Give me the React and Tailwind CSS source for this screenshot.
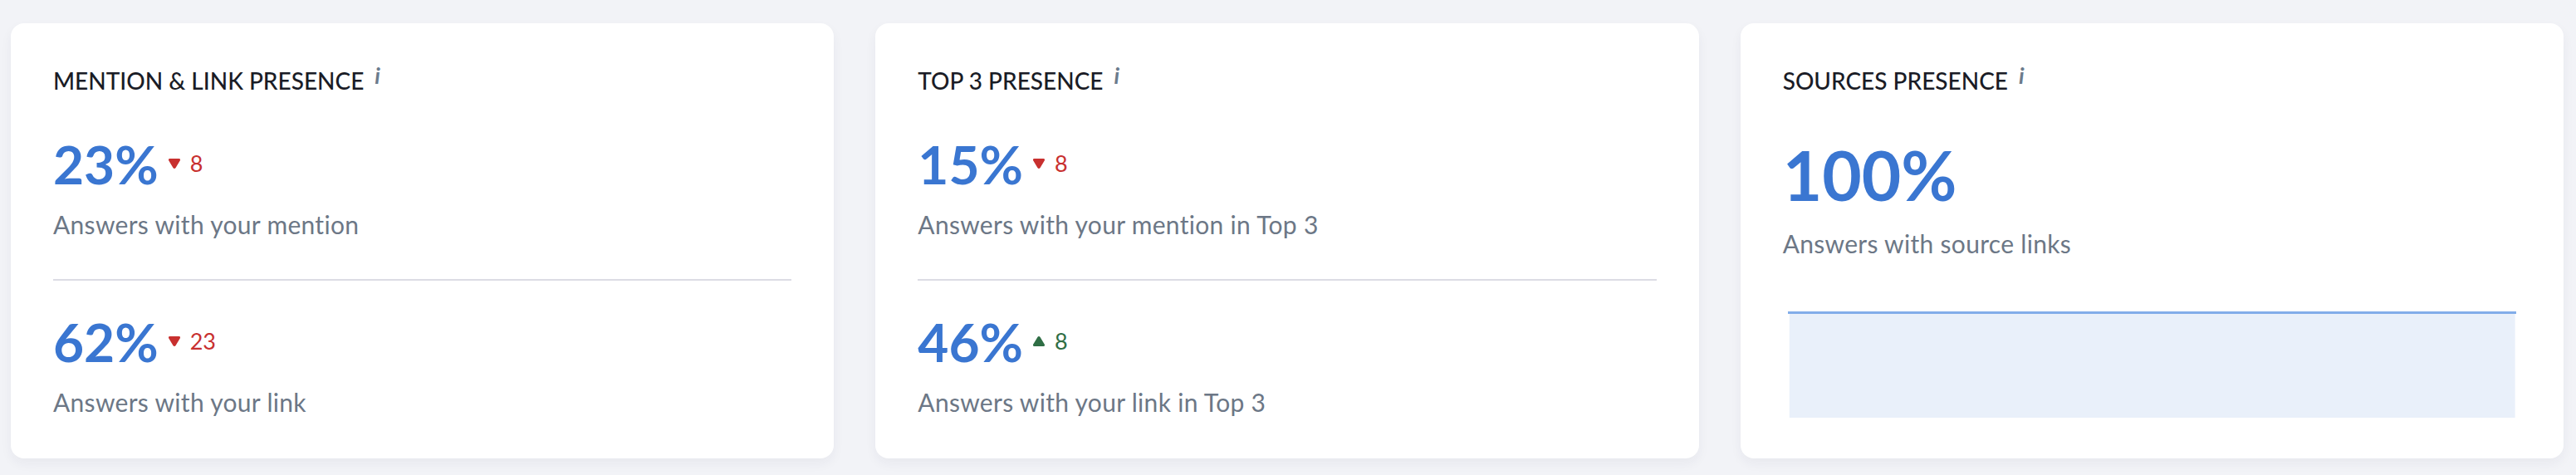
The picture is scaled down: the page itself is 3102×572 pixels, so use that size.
import React from 'react';

const font = { fontFamily: 'Lato, "Noto Sans", sans-serif' };

const Info = () => (
  <span className="ml-[13px] -mt-[6px] self-start text-[27px] leading-[34px] font-bold italic text-[#6b7b8c]">i</span>
);

const Title = ({ children }) => (
  <div className="flex items-start h-[34px]">
    <span className="text-[28px] leading-[34px] font-medium text-[#1a1c26] uppercase">{children}</span>
    <Info />
  </div>
);

const Delta = ({ value, up }) => (
  <div className={`flex items-center gap-[11px] mt-[18px] ml-[11px] ${up ? 'text-[#2f6e45]' : 'text-[#c8302f]'}`}>
    <svg width="16" height="14" viewBox="0 0 16 14">
      {up ? (
        <path d="M8 1 Q9 1 9.6 2 L15 11 Q15.6 13 13.6 13 L2.4 13 Q0.4 13 1 11 L6.4 2 Q7 1 8 1 Z" fill="currentColor" />
      ) : (
        <path d="M8 13 Q9 13 9.6 12 L15 3 Q15.6 1 13.6 1 L2.4 1 Q0.4 1 1 3 L6.4 12 Q7 13 8 13 Z" fill="currentColor" />
      )}
    </svg>
    <span className="text-[27px] leading-[26px]">{value}</span>
  </div>
);

const Metric = ({ value, delta, up, label }) => (
  <div className="flex flex-col">
    <div className="flex items-start">
      <span className="text-[64px] leading-[64px] font-bold text-[#3a76d1]">{value}</span>
      <Delta value={delta} up={up} />
    </div>
    <div className="mt-[22px] text-[30px] leading-[36px] tracking-[0.3px] text-[#6c7786] [font-variant-ligatures:none]">{label}</div>
  </div>
);

const Card = ({ children }) => (
  <div className="flex-1 h-[524px] bg-white rounded-[16px] shadow-[0_6px_14px_rgba(30,40,80,0.05)] px-[51px] pt-[52px] flex flex-col">
    {children}
  </div>
);

const TwoMetricCard = ({ title, top, bottom }) => (
  <Card>
    <Title>{title}</Title>
    <div className="mt-[52px]">
      <Metric {...top} />
    </div>
    <div className="mt-[48px] h-[2px] bg-[#dcdce4]" />
    <div className="mt-[42px]">
      <Metric {...bottom} />
    </div>
  </Card>
);

export default function App() {
  return (
    <div style={font} className="w-[3102px] h-[572px] bg-[#f2f3f7] pl-[13px] pr-[15px] pt-[28px] flex gap-[50px]">
      <TwoMetricCard
        title="Mention & Link Presence"
        top={{ value: '23%', delta: '8', up: false, label: 'Answers with your mention' }}
        bottom={{ value: '62%', delta: '23', up: false, label: 'Answers with your link' }}
      />
      <TwoMetricCard
        title="Top 3 Presence"
        top={{ value: '15%', delta: '8', up: false, label: 'Answers with your mention in Top 3' }}
        bottom={{ value: '46%', delta: '8', up: true, label: 'Answers with your link in Top 3' }}
      />
      <Card>
        <Title>Sources Presence</Title>
        <div className="mt-[55px] text-[82px] leading-[82px] font-bold text-[#3a76d1]">100%</div>
        <div className="mt-[24px] text-[30px] leading-[36px] tracking-[0.3px] text-[#6c7786] [font-variant-ligatures:none]">Answers with source links</div>
        <div className="mt-[64px] mx-[6px] h-[128px]">
          <svg width="100%" height="128" preserveAspectRatio="none" viewBox="0 0 100 128">
            <rect x="0.2" y="2" width="99.6" height="126" fill="#e9f0fa" />
            <line x1="0" y1="1.5" x2="100" y2="1.5" stroke="#82ade9" strokeWidth="3" vectorEffect="non-scaling-stroke" />
          </svg>
        </div>
      </Card>
    </div>
  );
}
